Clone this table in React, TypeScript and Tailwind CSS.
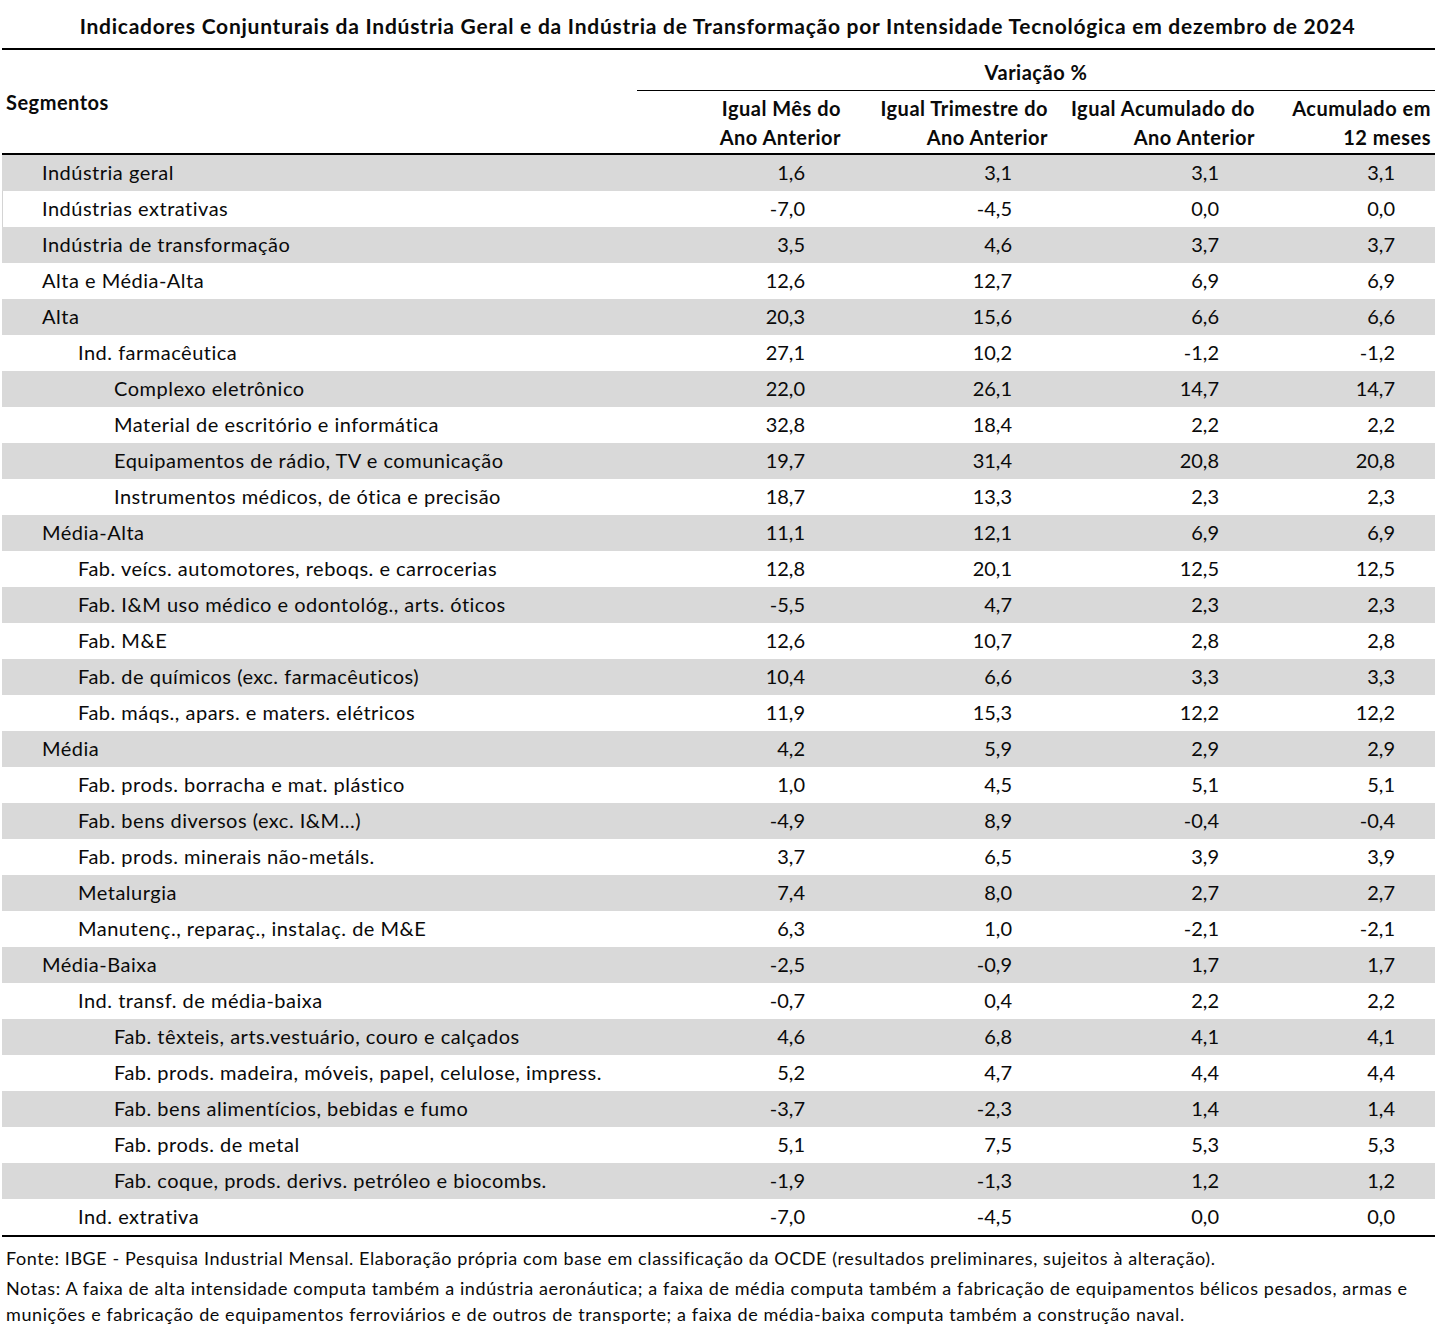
const rows: [string, number, string, string, string, string][] = [
  ["Indústria geral", 0, "1,6", "3,1", "3,1", "3,1"],
  ["Indústrias extrativas", 0, "-7,0", "-4,5", "0,0", "0,0"],
  ["Indústria de transformação", 0, "3,5", "4,6", "3,7", "3,7"],
  ["Alta e Média-Alta", 0, "12,6", "12,7", "6,9", "6,9"],
  ["Alta", 0, "20,3", "15,6", "6,6", "6,6"],
  ["Ind. farmacêutica", 1, "27,1", "10,2", "-1,2", "-1,2"],
  ["Complexo eletrônico", 2, "22,0", "26,1", "14,7", "14,7"],
  ["Material de escritório e informática", 2, "32,8", "18,4", "2,2", "2,2"],
  ["Equipamentos de rádio, TV e comunicação", 2, "19,7", "31,4", "20,8", "20,8"],
  ["Instrumentos médicos, de ótica e precisão", 2, "18,7", "13,3", "2,3", "2,3"],
  ["Média-Alta", 0, "11,1", "12,1", "6,9", "6,9"],
  ["Fab. veícs. automotores, reboqs. e carrocerias", 1, "12,8", "20,1", "12,5", "12,5"],
  ["Fab. I&M uso médico e odontológ., arts. óticos", 1, "-5,5", "4,7", "2,3", "2,3"],
  ["Fab. M&E", 1, "12,6", "10,7", "2,8", "2,8"],
  ["Fab. de químicos (exc. farmacêuticos)", 1, "10,4", "6,6", "3,3", "3,3"],
  ["Fab. máqs., apars. e maters. elétricos", 1, "11,9", "15,3", "12,2", "12,2"],
  ["Média", 0, "4,2", "5,9", "2,9", "2,9"],
  ["Fab. prods. borracha e mat. plástico", 1, "1,0", "4,5", "5,1", "5,1"],
  ["Fab. bens diversos (exc. I&M...)", 1, "-4,9", "8,9", "-0,4", "-0,4"],
  ["Fab. prods. minerais não-metáls.", 1, "3,7", "6,5", "3,9", "3,9"],
  ["Metalurgia", 1, "7,4", "8,0", "2,7", "2,7"],
  ["Manutenç., reparaç., instalaç. de M&E", 1, "6,3", "1,0", "-2,1", "-2,1"],
  ["Média-Baixa", 0, "-2,5", "-0,9", "1,7", "1,7"],
  ["Ind. transf. de média-baixa", 1, "-0,7", "0,4", "2,2", "2,2"],
  ["Fab. têxteis, arts.vestuário, couro e calçados", 2, "4,6", "6,8", "4,1", "4,1"],
  ["Fab. prods. madeira, móveis, papel, celulose, impress.", 2, "5,2", "4,7", "4,4", "4,4"],
  ["Fab. bens alimentícios, bebidas e fumo", 2, "-3,7", "-2,3", "1,4", "1,4"],
  ["Fab. prods. de metal", 2, "5,1", "7,5", "5,3", "5,3"],
  ["Fab. coque, prods. derivs. petróleo e biocombs.", 2, "-1,9", "-1,3", "1,2", "1,2"],
  ["Ind. extrativa", 1, "-7,0", "-4,5", "0,0", "0,0"],
];

const indent = ["pl-[40px]", "pl-[76px]", "pl-[112px]"];

const heads = [
  "Igual Mês do|Ano Anterior",
  "Igual Trimestre do|Ano Anterior",
  "Igual Acumulado do|Ano Anterior",
  "Acumulado em|12 meses",
];

export default function App() {
  return (
    <div className="w-[1435px] bg-white text-[#0a0a0a] font-['Lato','Liberation_Sans',sans-serif]">
      <h1 className="pt-[14px] h-[48px] text-center text-[21px] tracking-[0.75px] font-bold leading-[24px] whitespace-nowrap">
        Indicadores Conjunturais da Indústria Geral e da Indústria de Transformação por Intensidade Tecnológica em dezembro de 2024
      </h1>

      {/* header */}
      <div className="ml-[2px] border-t-[2px] border-b-[2px] border-black grid grid-cols-[635px_208px_207px_207px_176px] text-[20px] tracking-[0.5px] font-bold">
        <div className="row-span-2 flex items-center pl-[4px]">Segmentos</div>
        <div className="col-span-4 h-[41px] pt-[3px] flex items-center justify-center border-b border-black">
          Variação %
        </div>
        {heads.map((h) => (
          <div key={h} className="text-right pr-[4px] pt-[3px] pb-[1px] leading-[29px]">
            {h.split("|").map((l) => (
              <div key={l}>{l}</div>
            ))}
          </div>
        ))}
      </div>

      {/* body */}
      <div className="ml-[2px] border-b-[2px] border-black text-[20px] tracking-[0.5px]">
        {rows.map(([label, lvl, a, b, c, d], i) => (
          <div
            key={label}
            className={`grid grid-cols-[635px_208px_207px_207px_176px] h-[36px] pb-[2px] items-center ${
              i % 2 === 0 ? "bg-[#d9d9d9]" : "bg-white"
            } ${i === 1 ? "shadow-[inset_1px_0_0_#d4d4d4]" : ""}`}
          >
            <div className={`${indent[lvl]} whitespace-nowrap`}>{label}</div>
            {[a, b, c, d].map((v, k) => (
              <div key={k} className="text-right pr-[40px] tracking-normal">
                {v}
              </div>
            ))}
          </div>
        ))}
      </div>

      {/* footer */}
      <div className="pl-[6px] pt-[8px] text-[18px] tracking-[0.6px] leading-[26px]">
        <p className="mb-[4px] whitespace-nowrap">
          Fonte: IBGE - Pesquisa Industrial Mensal. Elaboração própria com base em classificação da OCDE (resultados preliminares, sujeitos à alteração).
        </p>
        <p className="whitespace-nowrap">
          Notas: A faixa de alta intensidade computa também a indústria aeronáutica; a faixa de média computa também a fabricação de equipamentos bélicos pesados, armas e
          <br />
          munições e fabricação de equipamentos ferroviários e de outros de transporte; a faixa de média-baixa computa também a construção naval.
        </p>
      </div>
    </div>
  );
}
